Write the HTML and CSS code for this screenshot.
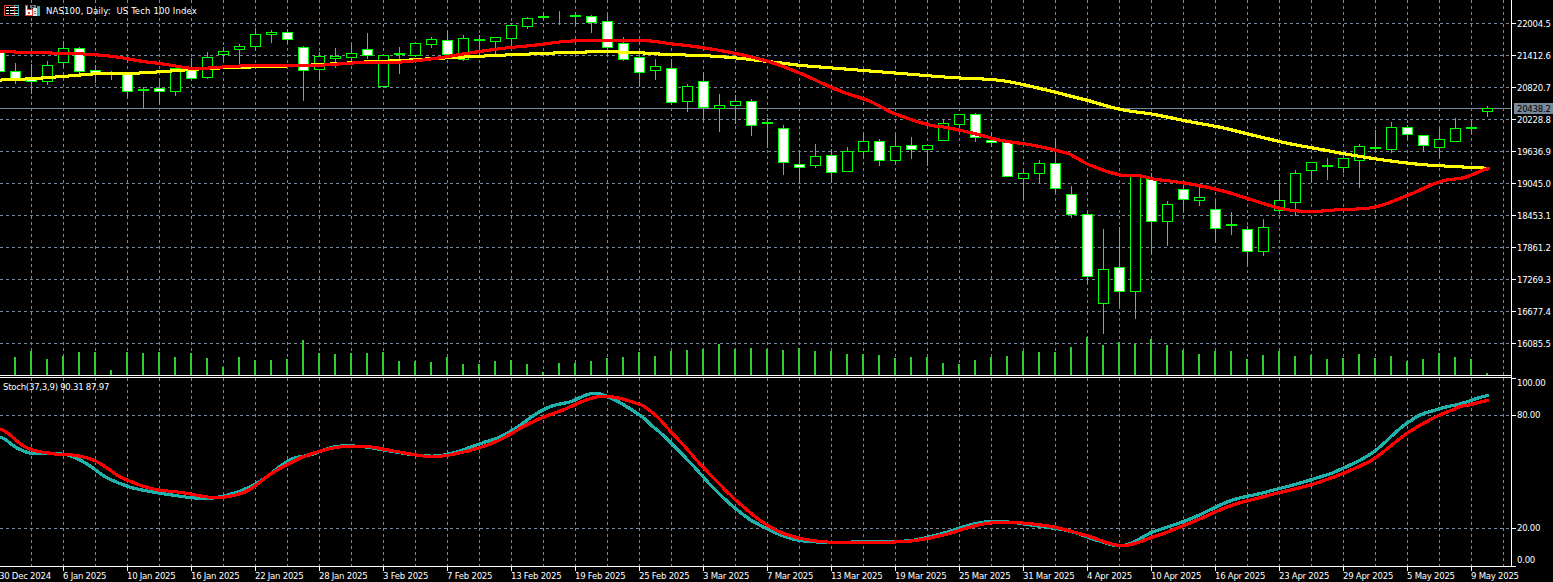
FILE: index.html
```html
<!DOCTYPE html>
<html lang="en">
<head>
<meta charset="utf-8">
<title>NAS100, Daily</title>
<link rel="stylesheet" href="styles.css">
</head>
<body>
<main class="chart">
  <section class="panes">
    <div class="pane pane-main">
      <svg id="main-plot" class="plot" viewBox="0 0 1511 375" width="1511" height="375"></svg>
      <div class="legend legend-main">
        <svg class="legend-icon" viewBox="0 0 15 11" width="15" height="11">
          <rect x="0" y="0" width="11" height="11" class="ico-fill-red"/>
          <rect x="1" y="1" width="9" height="9" class="ico-fill-black"/>
          <path d="M2 2.5h3M6 2.5h4M2 5.5h3M6 5.5h4M2 8.5h3M6 8.5h4" class="ico-white"/>
          <path d="M10 0.5h5M10 10.5h5M14.5 0v11M10 5.5h4" class="ico-teal-line"/>
          <path d="M10 2.5h4M10 8.5h4" class="ico-white"/>
        </svg>
        <svg class="legend-icon" viewBox="0 0 15 11" width="15" height="11">
          <path d="M0 0h3v4h5v7H0z" class="ico-fill-red"/>
          <rect x="1" y="1" width="1" height="9" class="ico-fill-white"/>
          <rect x="2" y="5" width="5" height="5" class="ico-fill-white"/>
          <rect x="3" y="7" width="2" height="2" class="ico-fill-red"/>
          <rect x="5" y="0" width="6" height="3" class="ico-fill-gray"/>
          <rect x="7" y="1" width="2" height="1" class="ico-fill-black"/>
          <rect x="8" y="3" width="4" height="8" class="ico-fill-pale"/>
          <rect x="12" y="1" width="3" height="10" class="ico-fill-teal"/>
          <path d="M9 6.5h2M9 8.5h2" class="ico-gray-line"/>
        </svg>
        <span class="legend-text">NAS100, Daily:&nbsp; US Tech 100 Index</span>
      </div>
    </div>
    <div class="pane-divider"></div>
    <div class="pane pane-stoch">
      <svg id="stoch-plot" class="plot" viewBox="0 378 1511 188" width="1511" height="188"></svg>
      <div class="legend legend-stoch">
        <span class="legend-text">Stoch(37,3,9) 90.31 87.97</span>
      </div>
    </div>
  </section>

  <aside class="value-axis">
    <div class="price-scale">
      <div class="scale-row">22004.5</div>
      <div class="scale-row">21412.6</div>
      <div class="scale-row">20820.7</div>
      <div class="scale-row">20228.8</div>
      <div class="scale-row">19636.9</div>
      <div class="scale-row">19045.0</div>
      <div class="scale-row">18453.1</div>
      <div class="scale-row">17861.2</div>
      <div class="scale-row">17269.3</div>
      <div class="scale-row">16677.4</div>
      <div class="scale-row">16085.5</div>
    </div>
    <div class="stoch-scale">
      <div class="stoch-row stoch-100">100.00</div>
      <div class="stoch-row stoch-80">80.00</div>
      <div class="stoch-row stoch-20">20.00</div>
      <div class="stoch-row stoch-0">0.00</div>
    </div>
    <div class="price-tag">20438.2</div>
  </aside>

  <footer class="time-axis">
    <span class="time-label">30 Dec 2024</span>
    <span class="time-label">6 Jan 2025</span>
    <span class="time-label">10 Jan 2025</span>
    <span class="time-label">16 Jan 2025</span>
    <span class="time-label">22 Jan 2025</span>
    <span class="time-label">28 Jan 2025</span>
    <span class="time-label">3 Feb 2025</span>
    <span class="time-label">7 Feb 2025</span>
    <span class="time-label">13 Feb 2025</span>
    <span class="time-label">19 Feb 2025</span>
    <span class="time-label">25 Feb 2025</span>
    <span class="time-label">3 Mar 2025</span>
    <span class="time-label">7 Mar 2025</span>
    <span class="time-label">13 Mar 2025</span>
    <span class="time-label">19 Mar 2025</span>
    <span class="time-label">25 Mar 2025</span>
    <span class="time-label">31 Mar 2025</span>
    <span class="time-label">4 Apr 2025</span>
    <span class="time-label">10 Apr 2025</span>
    <span class="time-label">16 Apr 2025</span>
    <span class="time-label">23 Apr 2025</span>
    <span class="time-label">29 Apr 2025</span>
    <span class="time-label">5 May 2025</span>
    <span class="time-label">9 May 2025</span>
  </footer>
</main>
<script src="chart.js"></script>
</body>
</html>
```
FILE: styles.css
```css
* { box-sizing: border-box; }

html, body {
  margin: 0;
  background: #000;
}

body {
  width: 1553px;
  height: 582px;
  overflow: hidden;
  color: #fff;
  font-family: "DejaVu Sans", "Liberation Sans", sans-serif;
  font-stretch: condensed;
  font-size: 9.5px;
  letter-spacing: -0.25px;
}

.chart {
  display: grid;
  grid-template-columns: 1511px 42px;
  grid-template-rows: 567px 15px;
  width: 1553px;
  height: 582px;
  overflow: hidden;
}

/* panes */
.panes {
  display: flex;
  flex-direction: column;
  border-bottom: 1px solid #fff;
}

.pane { position: relative; }
.pane-main { height: 375px; }
.pane-stoch { height: 188px; }

.pane-divider {
  height: 3px;
  border-top: 1px solid #fff;
  border-bottom: 1px solid #fff;
}

.plot {
  display: block;
  shape-rendering: crispEdges;
}

.grid-line {
  stroke: #778899;
  stroke-width: 1;
  stroke-dasharray: 3 3;
  fill: none;
}

.last-line { stroke: #778899; stroke-width: 1; }
.volume { fill: #32cd32; }
.wick { stroke: #00ff00; stroke-width: 1; }
.body-up { fill: #000; stroke: #00ff00; stroke-width: 1; }
.body-down { fill: #fff; stroke: #00ff00; stroke-width: 1; }

.ma-yellow { fill: #ffff00; }
.ma-red { fill: #ff0000; }
.stoch-main { fill: #20b2aa; }
.stoch-signal { fill: #ff0000; }

/* legends over the plot */
.legend {
  position: absolute;
  display: flex;
  align-items: center;
  white-space: nowrap;
}

.legend-main { left: 4px; top: 5px; height: 11px; gap: 6px; }
.legend-main .legend-text { letter-spacing: 0.11px; }
.legend-stoch { left: 3px; top: 3px; height: 11px; }
.legend-text { display: block; line-height: 11px; }

.legend-icon { display: block; flex: none; shape-rendering: crispEdges; }
.ico-white { stroke: #fff; fill: none; }
.ico-teal-line { stroke: #35b0b0; fill: none; }
.ico-gray-line { stroke: #6d7b8a; fill: none; }
.ico-fill-red { fill: #e0402f; }
.ico-fill-black { fill: #000; }
.ico-fill-white { fill: #fff; }
.ico-fill-pale { fill: #dfe6e6; }
.ico-fill-gray { fill: #6d7b8a; }
.ico-fill-teal { fill: #35b0b0; }

/* right axis */
.value-axis {
  position: relative;
  display: flex;
  flex-direction: column;
  border-left: 1px solid #fff;
}

.price-scale {
  display: flex;
  flex-direction: column;
  padding-top: 7px;
  height: 378px;
}

.scale-row {
  position: relative;
  height: 32px;
  line-height: 33px;
  padding-left: 5px;
}

.scale-row::before,
.stoch-row::before {
  content: "";
  position: absolute;
  left: 0;
  top: 16px;
  width: 4px;
  height: 1px;
  background: #fff;
}

.stoch-scale { display: flex; flex-direction: column; }

.stoch-row {
  position: relative;
  height: 10px;
  line-height: 10px;
  padding-left: 5px;
}

.stoch-row::before { top: 5px; }
.stoch-100::before { top: 0; }
.stoch-80 { margin-top: 22px; }
.stoch-20 { margin-top: 103px; }
.stoch-0 { margin-top: 22px; }
.stoch-0::before { top: 11px; }

.price-tag {
  position: absolute;
  left: 2px;
  top: 103px;
  width: 39px;
  height: 11px;
  padding-left: 3px;
  line-height: 11px;
  background: #778899;
  color: #000;
}

/* bottom axis */
.time-axis {
  grid-column: 1 / -1;
  display: flex;
  margin-left: -1px;
  white-space: nowrap;
}

.time-label {
  position: relative;
  flex: 0 0 64px;
  line-height: 17px;
}

.time-label::before {
  content: "";
  position: absolute;
  left: 0;
  top: 0;
  width: 1px;
  height: 4px;
  background: #fff;
}
```
FILE: chart.js
```js
// One row per bar: high, bodyTop, bodyBottom, low, filled(1 = white/bearish), in pixels
var candles = [
[50,52,71,72,1],[63,71,78,83,1],[64,79,81,93,1],[61,65,81,84,0],[41,48,62,67,0],[47,48,71,73,1],[65,70,74,82,1],[71,73,74,79,0],
[72,74,91,98,1],[87,89,90,107,0],[81,88,91,103,1],[67,68,91,95,0],[58,70,78,79,1],[52,57,77,78,0],[47,51,54,62,0],[44,46,49,65,0],
[28,34,46,50,0],[30,32,34,42,0],[29,32,39,43,1],[46,47,70,100,1],[52,56,69,79,0],[48,56,58,67,0],[45,53,57,63,0],[33,49,55,58,1],
[55,55,86,87,0],[47,53,54,73,0],[43,43,55,56,0],[37,39,44,47,0],[31,40,54,57,1],[35,38,59,60,0],[35,39,40,55,0],[37,37,41,55,0],
[23,25,38,45,0],[17,18,26,28,0],[12,16,17,19,0],[11,16,16,24,0],[12,15,16,24,0],[15,16,22,32,1],[15,21,47,55,1],[37,43,59,60,1],
[57,57,72,85,1],[59,66,70,79,0],[59,68,102,104,1],[84,86,101,111,0],[72,81,107,118,1],[94,105,108,131,0],[95,101,105,123,0],[99,101,125,135,1],
[118,122,123,147,0],[125,128,162,174,1],[150,164,167,182,1],[144,156,165,167,0],[149,155,172,182,1],[147,151,171,171,0],[132,141,151,158,0],[139,141,160,165,1],
[135,146,160,164,0],[137,145,149,158,1],[145,145,149,165,0],[119,123,140,140,0],[114,114,124,127,0],[113,114,137,141,1],[132,140,142,146,1],[142,142,176,176,1],
[170,173,178,199,0],[160,163,173,182,0],[138,163,188,192,1],[186,194,214,217,1],[210,214,276,283,1],[229,269,303,333,0],[227,267,291,306,1],[175,175,291,318,0],
[173,179,221,253,1],[201,204,221,245,0],[182,189,199,210,1],[187,197,200,205,0],[201,209,228,242,1],[212,224,225,234,0],[226,229,251,265,1],[219,227,251,255,0],
[183,200,210,213,0],[170,173,202,215,0],[162,162,170,181,0],[158,165,166,179,0],[155,158,167,172,0],[144,146,160,187,0],[130,147,148,151,0],[122,127,149,152,0],
[125,127,134,140,1],[135,135,145,151,1],[129,139,147,157,0],[118,128,141,141,0],[120,127,128,133,0],[106,108,111,116,0]
];

var volumeTops = [
375,357,351,359,356,352,352,370,352,353,352,357,353,358,367,357,360,360,359,340,353,354,353,353,352,361,
361,362,357,364,364,361,360,364,372,363,363,361,358,357,352,356,351,350,349,344,349,348,349,350,348,
351,351,354,354,355,358,357,357,363,364,360,357,356,351,352,352,347,337,345,342,344,339,345,350,354,
351,351,359,355,351,356,355,359,358,354,358,356,361,359,353,357,359,373
];

var yellow = [[0,79.5],[33,78],[67,75.5],[100,73],[133,72.7],[167,70.7],[200,68.3],[233,67],[267,66],[300,65],[333,63.3],[367,61.3],[400,60],[433,58],[467,56.3],[500,54.7],[533,53.3],[567,52],[600,51.3],[633,52],[667,54],[700,55],[733,57.3],[767,61],[800,65],[850,69],[900,73],[950,77],[1000,80],[1043,89],[1087,100],[1120,109],[1153,114],[1186,120.7],[1220,127],[1253,135],[1286,142.7],[1320,149],[1353,155],[1386,160],[1420,164],[1453,166],[1488,167.7]];

var red = [[0,50.7],[17,51.7],[50,52.5],[67,52.7],[100,54.7],[117,56.7],[140,60.7],[160,63.3],[193,68],[217,66.7],[250,65],[293,64.7],[310,65.3],[333,63.7],[367,61.7],[400,61.5],[433,58],[467,52.7],[500,48],[533,44.7],[567,40.7],[600,40.3],[647,40.3],[667,43],[700,47],[733,52.7],[767,61],[800,73.3],[838,90],[867,100],[893,113],[927,124],[943,126.7],[973,133],[1000,140],[1033,145],[1067,153],[1087,164],[1117,174],[1137,175],[1153,178.7],[1186,183],[1220,190],[1253,200],[1280,208],[1306,211],[1340,209],[1373,206.7],[1406,195],[1440,181],[1463,177],[1488,168]];

var stochMain = [[0,437],[15,447],[30,453],[65,454],[85,463],[105,477],[130,487],[160,493],[205,498],[235,492],[260,480],[288,460],[310,454],[335,446],[360,446],[385,450],[420,455],[445,454],[480,443],[505,433],[543,409],[570,401],[591,393],[607,396.5],[630,409],[650,425],[685,458],[720,495],[750,520],[790,538],[830,542],[860,541],[910,540],[945,532],[975,523],[1000,521],[1040,526],[1070,531],[1100,541],[1122,545],[1150,532],[1190,518],[1230,500],[1270,490],[1330,473],[1370,453],[1410,420],[1436,409],[1460,403],[1487,395]];

var stochSignal = [[0,429],[25,447],[50,453],[75,455],[95,461],[120,477],[150,488],[180,492],[215,497],[245,491],[270,473],[300,457],[335,447],[365,446],[395,451],[430,456],[460,452],[495,441],[530,422],[563,409],[590,398],[607,396],[630,401],[647,409],[670,432],[700,465],[735,500],[770,527],[800,538],[835,542],[905,541],[940,535],[980,524],[1010,522],[1050,526],[1085,535],[1120,545],[1150,537],[1190,522],[1230,505],[1270,494],[1320,481],[1370,460],[1410,430],[1453,409],[1470,404],[1487,400]];

var NS = "http://www.w3.org/2000/svg";

function add(svg, tag, cls, attrs) {
  var el = document.createElementNS(NS, tag);
  if (cls) el.setAttribute("class", cls);
  for (var k in attrs) el.setAttribute(k, attrs[k]);
  svg.appendChild(el);
  return el;
}

function grid(svg, y0, y1, rows) {
  var d = "";
  rows.forEach(function (y) { d += "M0 " + (y + 0.5) + "H1511"; });
  for (var x = 31; x < 1511; x += 32) d += "M" + (x + 0.5) + " " + y0 + "V" + y1;
  add(svg, "path", "grid-line", { d: d });
}

// Stamp a small pixel pen along a smooth curve through the points, as the terminal does.
function series(svg, cls, pts) {
  var d = "", seen = {};
  for (var i = 0; i < pts.length - 1; i++) {
    var p0 = pts[Math.max(i - 1, 0)], p1 = pts[i], p2 = pts[i + 1], p3 = pts[Math.min(i + 2, pts.length - 1)];
    var steps = Math.ceil(p2[0] - p1[0]) * 2;
    for (var s = 0; s <= steps; s++) {
      var t = s / steps, t2 = t * t, t3 = t2 * t;
      var x = p1[0] + (p2[0] - p1[0]) * t;
      var y = 0.5 * (2 * p1[1] + (p2[1] - p0[1]) * t + (2 * p0[1] - 5 * p1[1] + 4 * p2[1] - p3[1]) * t2 + (3 * p1[1] - p0[1] - 3 * p2[1] + p3[1]) * t3);
      var px = Math.round(x), py = Math.round(y), key = px + "_" + py;
      if (seen[key]) continue;
      seen[key] = 1;
      d += "M" + px + " " + (py - 1) + "h2v3h-2z";
    }
  }
  add(svg, "path", cls, { d: d });
}

var main = document.getElementById("main-plot");
var stoch = document.getElementById("stoch-plot");

grid(main, 0, 375, [23, 55, 87, 119, 151, 183, 215, 247, 279, 311, 343]);
add(main, "line", "last-line", { x1: 0, x2: 1511, y1: 108.5, y2: 108.5 });

volumeTops.forEach(function (top, i) {
  var x = -1 + 16 * i;
  add(main, "rect", "volume", { x: x - 1, y: top, width: 2, height: 375 - top });
});

candles.forEach(function (c, i) {
  var x = -1 + 16 * i;
  add(main, "line", "wick", { x1: x + 0.5, x2: x + 0.5, y1: c[0], y2: c[3] + 1 });
  add(main, "rect", c[4] ? "body-down" : "body-up", {
    x: x - 4.5, y: c[1] + 0.5, width: 10, height: c[2] - c[1]
  });
});

series(main, "ma-yellow", yellow);
series(main, "ma-red", red);

grid(stoch, 378, 566, [415, 528]);
series(stoch, "stoch-main", stochMain);
series(stoch, "stoch-signal", stochSignal);
```
